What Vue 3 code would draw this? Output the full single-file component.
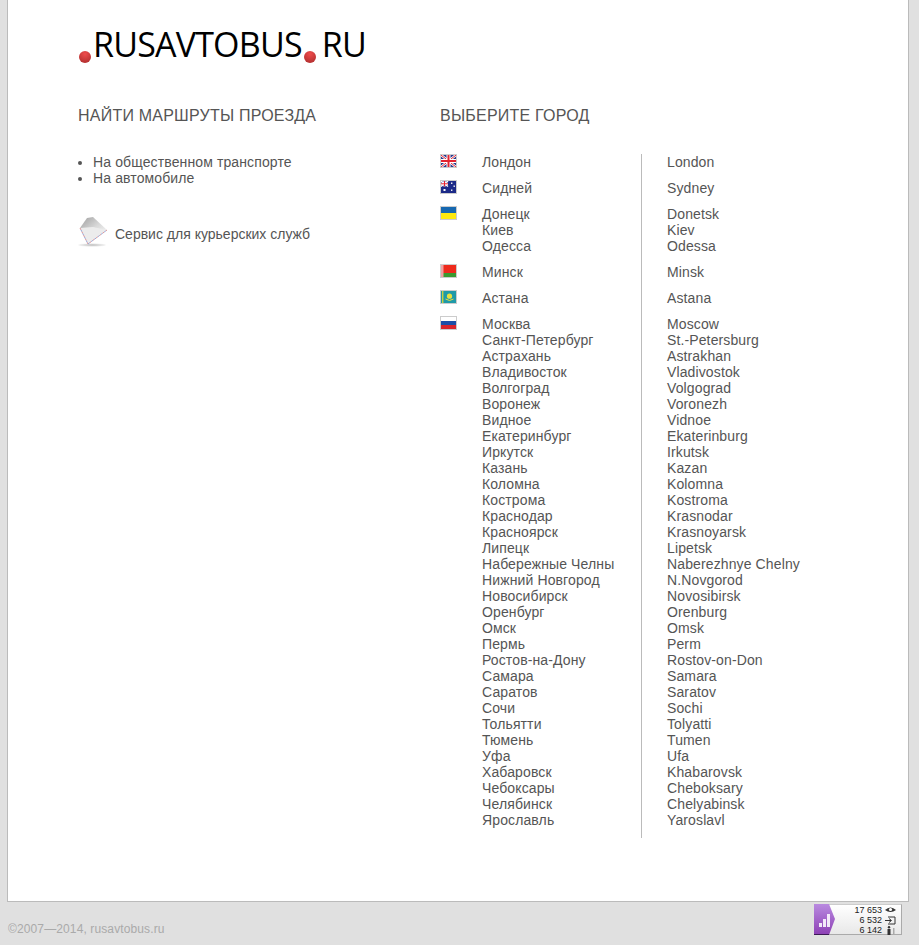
<template>
  <div class="page">
    <div class="logo">
      <span class="dot first"></span><span>RUSAVTOBUS</span><span class="dot second"></span><span>RU</span>
    </div>
    <div class="columns">
      <div class="left">
        <h2>НАЙТИ МАРШРУТЫ ПРОЕЗДА</h2>
        <ul>
          <li><a href="#">На общественном транспорте</a></li>
          <li><a href="#">На автомобиле</a></li>
        </ul>
        <div class="courier">
          <svg width="32" height="32" viewBox="0 0 32 32">
            <defs>
              <linearGradient id="env" x1="0.1" y1="0" x2="0.8" y2="0.8">
                <stop offset="0" stop-color="#a4a4a4" />
                <stop offset="0.55" stop-color="#d8d8d8" />
                <stop offset="1" stop-color="#f4f4f4" />
              </linearGradient>
              <radialGradient id="shadow">
                <stop offset="0" stop-color="#bdbdbd" />
                <stop offset="1" stop-color="#f6f6f6" />
              </radialGradient>
            </defs>
            <ellipse cx="14" cy="27" rx="14" ry="1.8" fill="url(#shadow)" />
            <path d="M2 10 L9 0 L15 -1 L29 12 L10 26 Z" fill="url(#env)" />
            <path d="M2 10 L15 9 L29 12 L10 26 Z" fill="#ececec" />
            <path d="M2 10 L10 26 L29 12" stroke="#e08a8a" stroke-width="0.9" stroke-dasharray="2 2" fill="none" />
            <path d="M2 10 L10 26 L29 12" stroke="#8aa0d8" stroke-width="0.9" stroke-dasharray="2 2" stroke-dashoffset="2" fill="none" />
          </svg>
          <a href="#">Сервис для курьерских служб</a>
        </div>
      </div>
      <div class="right">
        <h2>ВЫБЕРИТЕ ГОРОД</h2>
        <div class="rows">
          <div class="row" v-for="group in groups" :key="group.flag">
            <div class="flag-cell">
              <svg class="flag" width="17" height="14" viewBox="0 0 15 12" preserveAspectRatio="none" v-html="flags[group.flag]"></svg>
            </div>
            <div class="ru">
              <a href="#" v-for="city in group.cities" :key="city[0]">{{ city[0] }}</a>
            </div>
            <div class="en">
              <a href="#" v-for="city in group.cities" :key="city[1]">{{ city[1] }}</a>
            </div>
          </div>
        </div>
      </div>
    </div>
  </div>
  <div class="footer">
    <span class="copy">©2007—2014, rusavtobus.ru</span>
    <div class="counter">
      <svg class="counter-tab" width="22" height="31" viewBox="0 0 22 31">
        <defs>
          <linearGradient id="tab" x1="0" y1="0" x2="0" y2="1">
            <stop offset="0" stop-color="#b98ae0" />
            <stop offset="1" stop-color="#8c3fb4" />
          </linearGradient>
        </defs>
        <path d="M0 0 H15 L21 15 L15 31 H0 Z" fill="url(#tab)" />
        <path d="M0 30.5 H15" stroke="#3c1a55" />
        <path d="M5 23 h3 v-4 h-3 Z M9 23 h3 v-8 h-3 Z M13 23 h3 v-13 h-3 Z" fill="#f3e9f9" />
      </svg>
      <div class="counter-nums">
        <div v-for="line in counter" :key="line.n" class="counter-line">
          <span>{{ line.n }}</span>
          <svg width="11" height="9" viewBox="0 0 11 9" v-html="line.icon"></svg>
        </div>
      </div>
    </div>
  </div>
</template>

<script setup>
const groups = [
  { flag: "uk", cities: [["Лондон", "London"]] },
  { flag: "au", cities: [["Сидней", "Sydney"]] },
  { flag: "ua", cities: [["Донецк", "Donetsk"], ["Киев", "Kiev"], ["Одесса", "Odessa"]] },
  { flag: "by", cities: [["Минск", "Minsk"]] },
  { flag: "kz", cities: [["Астана", "Astana"]] },
  {
    flag: "ru",
    cities: [
      ["Москва", "Moscow"],
      ["Санкт-Петербург", "St.-Petersburg"],
      ["Астрахань", "Astrakhan"],
      ["Владивосток", "Vladivostok"],
      ["Волгоград", "Volgograd"],
      ["Воронеж", "Voronezh"],
      ["Видное", "Vidnoe"],
      ["Екатеринбург", "Ekaterinburg"],
      ["Иркутск", "Irkutsk"],
      ["Казань", "Kazan"],
      ["Коломна", "Kolomna"],
      ["Кострома", "Kostroma"],
      ["Краснодар", "Krasnodar"],
      ["Красноярск", "Krasnoyarsk"],
      ["Липецк", "Lipetsk"],
      ["Набережные Челны", "Naberezhnye Chelny"],
      ["Нижний Новгород", "N.Novgorod"],
      ["Новосибирск", "Novosibirsk"],
      ["Оренбург", "Orenburg"],
      ["Омск", "Omsk"],
      ["Пермь", "Perm"],
      ["Ростов-на-Дону", "Rostov-on-Don"],
      ["Самара", "Samara"],
      ["Саратов", "Saratov"],
      ["Сочи", "Sochi"],
      ["Тольятти", "Tolyatti"],
      ["Тюмень", "Tumen"],
      ["Уфа", "Ufa"],
      ["Хабаровск", "Khabarovsk"],
      ["Чебоксары", "Cheboksary"],
      ["Челябинск", "Chelyabinsk"],
      ["Ярославль", "Yaroslavl"],
    ],
  },
];

const flags = {
  uk: '<rect width="15" height="12" fill="#2a3a8c"/><path d="M0 0L15 12M15 0L0 12" stroke="#fff" stroke-width="2.4"/><path d="M0 0L15 12M15 0L0 12" stroke="#e3222f" stroke-width="1"/><path d="M7.5 0V12M0 6H15" stroke="#fff" stroke-width="4"/><path d="M7.5 0V12M0 6H15" stroke="#e3222f" stroke-width="2"/>',
  au: '<rect width="15" height="12" fill="#1b2a88"/><path d="M0 0L7 5.5M7 0L0 5.5" stroke="#fff" stroke-width="1.4"/><path d="M3.5 0V5.5M0 2.8H7" stroke="#fff" stroke-width="2.2"/><path d="M3.5 0V5.5M0 2.8H7" stroke="#e3222f" stroke-width="1"/><g fill="#fff"><rect x="2.5" y="8" width="2" height="2"/><rect x="10" y="1.5" width="1.4" height="1.4"/><rect x="12.5" y="4.5" width="1.4" height="1.4"/><rect x="10" y="8.5" width="1.4" height="1.4"/></g>',
  ua: '<rect width="15" height="6" fill="#1668b0"/><rect y="6" width="15" height="6" fill="#fde910"/>',
  by: '<rect width="15" height="12" fill="#ee2a1c"/><rect y="8" width="15" height="4" fill="#3a9a30"/><rect width="2.5" height="12" fill="#f0a0a0"/>',
  kz: '<rect width="15" height="12" fill="#1f9aa8"/><rect x="1" width="1.4" height="12" fill="#c8d040"/><circle cx="8.5" cy="5.2" r="2.6" fill="#e8e040"/><path d="M4.5 8Q8.5 11 12.5 8" stroke="#e8e040" fill="none"/>',
  ru: '<rect width="15" height="4" fill="#fff"/><rect y="4" width="15" height="4" fill="#1c4fa8"/><rect y="8" width="15" height="4" fill="#d9252b"/>',
};

const counter = [
  { n: "17 653", icon: '<path d="M0 4Q5.5 -1 11 4Q5.5 8 0 4Z" fill="#333"/><circle cx="5.5" cy="3.5" r="1.6" fill="#fff"/>' },
  { n: "6 532", icon: '<path d="M3 1H10V8H3M0 4.5H6M4 2.5L6.5 4.5L4 6.5" stroke="#333" fill="none"/>' },
  { n: "6 142", icon: '<circle cx="4" cy="1.2" r="1.2" fill="#333"/><rect x="2.5" y="3" width="3" height="6" fill="#333"/><rect x="8" y="2" width="1.5" height="7" fill="#aaa"/>' },
];
</script>

<style>
html,
body {
  background: #e0e0e0;
}
</style>

<style scoped>
.page {
  box-sizing: border-box;
  width: 902px;
  height: 902px;
  margin-left: 7px;
  padding: 0 0 0 70px;
  background: #fff;
  border: 1px solid #bbb;
  border-top: none;
  font-family: "Liberation Sans", Arial, sans-serif;
  font-size: 14px;
  line-height: 16px;
  letter-spacing: 0.12px;
  color: #555;
}

a {
  color: #555;
  text-decoration: none;
}

.logo {
  display: flex;
  height: 100px;
  padding-top: 22px;
  box-sizing: border-box;
  font-family: "Open Sans", sans-serif;
  font-size: 34px;
  font-kerning: none;
  line-height: 44px;
  color: #000;
  letter-spacing: -0.8px;
}

.dot {
  width: 12px;
  height: 12px;
  margin-top: 29px;
  border-radius: 50%;
  background: radial-gradient(circle at 50% 25%, #ee4c4c, #a82a2a);
}

.dot.first {
  margin: 29px 2px 0 1px;
}

.dot.second {
  margin: 29px 6px 0 2px;
}

.columns {
  display: flex;
}

.left {
  width: 362px;
}

h2 {
  margin: 0;
  height: 54px;
  font-size: 16px;
  font-weight: normal;
  line-height: 32px;
  letter-spacing: 0.22px;
  color: #555;
}

ul {
  margin: 0;
  padding: 0 0 0 15px;
}

.courier {
  display: flex;
  align-items: center;
  gap: 5px;
  margin-top: 32px;
  letter-spacing: 0;
}

.courier svg {
  overflow: visible;
}

.rows {
  display: flex;
  flex-direction: column;
}

.row {
  display: flex;
}

.flag-cell {
  width: 42px;
}

.flag {
  display: block;
  box-sizing: border-box;
  border: 1px solid #ccc;
}

.ru {
  width: 159px;
  padding-bottom: 10px;
}

.en {
  padding: 0 0 10px 25px;
  border-left: 1px solid #bbb;
}

.ru a,
.en a {
  display: block;
}

.footer {
  display: flex;
  justify-content: space-between;
  width: 894px;
  margin-left: 8px;
  font-family: "Liberation Sans", Arial, sans-serif;
}

.copy {
  margin-top: 20px;
  font-size: 12px;
  line-height: 14px;
  letter-spacing: 0.12px;
  color: #aaa;
}

.counter {
  display: flex;
  box-sizing: border-box;
  width: 88px;
  height: 31px;
  margin-top: 2px;
  background: linear-gradient(#fff, #e8e8e8);
  border-right: 1px solid #aaa;
  border-bottom: 1px solid #aaa;
  border-top: 1px solid #ccc;
}

.counter-tab {
  display: block;
  flex-shrink: 0;
  margin-top: -1px;
}

.counter-nums {
  flex: 1;
}

.counter-line {
  display: flex;
  justify-content: flex-end;
  align-items: center;
  gap: 3px;
  padding-right: 5px;
  height: 10px;
  font-size: 9px;
  line-height: 10px;
  color: #222;
}

.counter-line svg {
  flex-shrink: 0;
}
</style>
